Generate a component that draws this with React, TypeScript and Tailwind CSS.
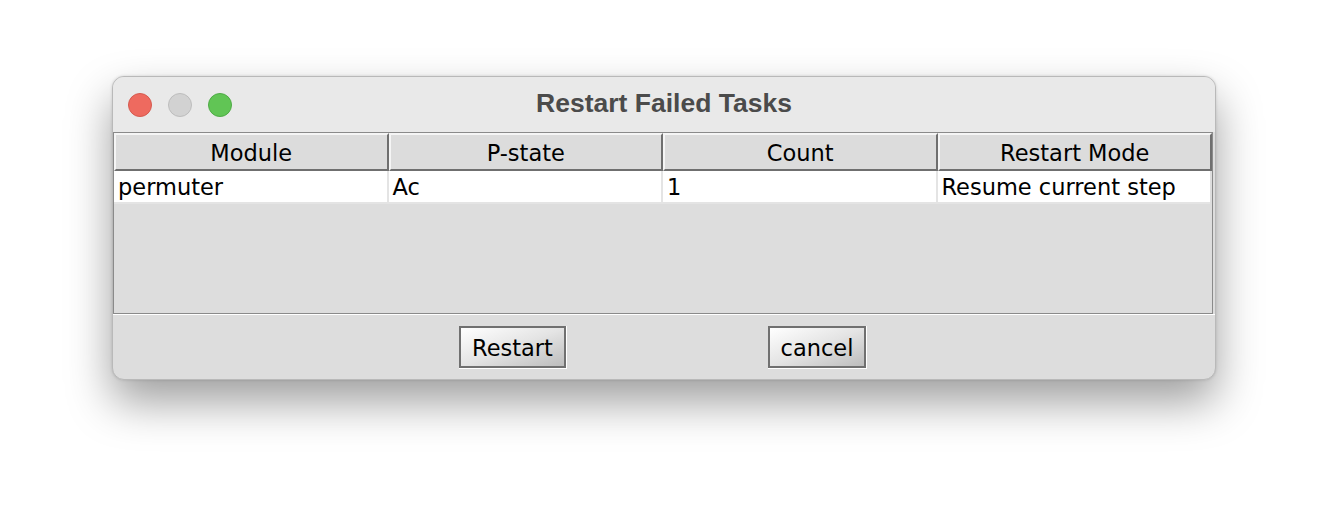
import React from "react";

const font = { fontFamily: '"DejaVu Sans", "Liberation Sans", sans-serif' };

function HeaderCell({ label }: { label: string }) {
  return (
    <div className="flex-1 h-[38px] flex items-center justify-center pt-[2px] bg-[#dcdcdc] border-t-2 border-l-2 border-t-[#f5f5f5] border-l-[#f5f5f5] border-b-2 border-r-2 border-b-[#6f6f6f] border-r-[#6f6f6f] text-[22.5px] text-black leading-none">
      {label}
    </div>
  );
}

function DataCell({ value, last }: { value: string; last?: boolean }) {
  return (
    <div
      className={`flex-1 h-[33px] flex items-center pl-[4px] pt-[1px] bg-white text-[22.5px] text-black leading-none border-b-2 border-b-[#e4e4e4] ${last ? "" : "border-r-2 border-r-[#e4e4e4]"}`}
    >
      {value}
    </div>
  );
}

function Button({ label, w }: { label: string; w: string }) {
  return (
    <div className="border-r border-b border-white">
      <div
        className={`${w} h-[42px] flex items-center justify-center pt-[3px] border-2 border-[#707070] bg-gradient-to-br from-[#ffffff] via-[#e4e4e4] to-[#bdbdbd] text-[22.5px] text-black leading-none`}
      >
        {label}
      </div>
    </div>
  );
}

export default function App() {
  return (
    <div className="w-[1328px] h-[528px] bg-white pt-[76px] pl-[112px]" style={font}>
      <div className="w-[1104px] h-[304px] rounded-[12px] border border-[#b9b9b9] overflow-hidden shadow-[0_22px_45px_rgba(0,0,0,0.38),0_0_3px_rgba(0,0,0,0.15)] bg-[#dddddd] flex flex-col">
        <div className="h-[55px] bg-[#e9e9e9] relative flex items-center">
          <div className="flex gap-[16px] pl-[15px] pt-[1px]">
            <div className="w-[24px] h-[24px] rounded-full bg-[#ee6a5f] border border-[#d55a4f]" />
            <div className="w-[24px] h-[24px] rounded-full bg-[#d2d2d2] border border-[#bdbdbd]" />
            <div className="w-[24px] h-[24px] rounded-full bg-[#61c555] border border-[#4fab46]" />
          </div>
          <div
            className="absolute inset-0 flex items-center justify-center text-[26.5px] font-bold text-[#4b4b4b] pb-[2px]"
            style={{ fontFamily: '"Liberation Sans", Arial, sans-serif' }}
          >
            Restart Failed Tasks
          </div>
        </div>
        <div className="border-b border-white">
          <div className="h-[182px] border border-[#8a8a8a] mr-[2px] bg-[#dddddd] flex flex-col">
            <div className="flex">
              <HeaderCell label="Module" />
              <HeaderCell label="P-state" />
              <HeaderCell label="Count" />
              <HeaderCell label="Restart Mode" />
            </div>
            <div className="flex mr-[2px]">
              <DataCell value="permuter" />
              <DataCell value="Ac" />
              <DataCell value="1" />
              <DataCell value="Resume current step" last />
            </div>
          </div>
        </div>
        <div className="flex-1 flex items-center justify-center gap-[201px] pr-[2px]">
          <Button label="Restart" w="w-[107px]" />
          <Button label="cancel" w="w-[98px]" />
        </div>
      </div>
    </div>
  );
}
